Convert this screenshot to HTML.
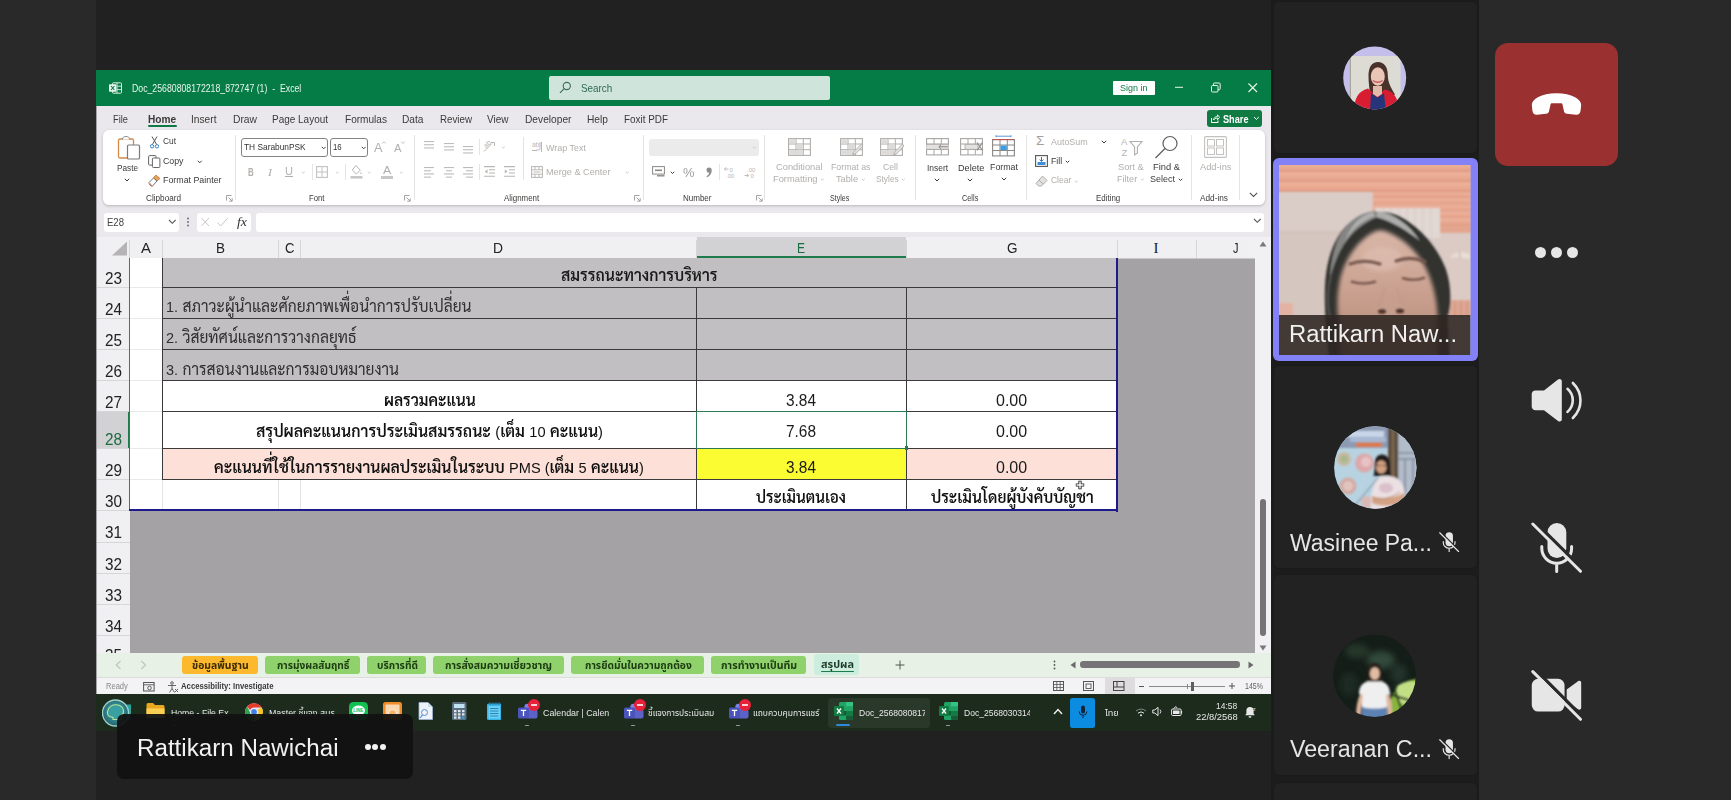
<!DOCTYPE html>
<html lang="th"><head><meta charset="utf-8"><title>Meeting - shared Excel</title><style>
html,body{margin:0;padding:0}
body{width:1731px;height:800px;overflow:hidden;background:#212121;position:relative;font-family:"Liberation Sans","Noto Sans Thai","Sarabun",sans-serif;}
.a{position:absolute;display:block}
.t{position:absolute;white-space:pre;line-height:1;transform-origin:0 50%;font-family:"Liberation Sans","Noto Sans Thai","Sarabun",sans-serif;}
.c{font-family:"Liberation Sans","Sarabun","Noto Sans Thai",sans-serif;}
</style></head>
<body>
<div class="a" style="left:0px;top:0px;width:96px;height:800px;background:#292929;"></div>
<div class="a" style="left:1271px;top:0px;width:460px;height:800px;background:#292929;"></div>
<div class="a" style="left:1271px;top:0px;width:207.5px;height:800px;background:#1c1c1c;"></div>
<div class="a" style="left:96px;top:70px;width:1175px;height:36px;background:#057c45;"></div>
<div class="a" style="left:96px;top:106px;width:1175px;height:131px;background:#eae8ed;"></div>
<svg class="a" style="left:108.5px;top:82px;" width="13" height="12" viewBox="0 0 13 12"><rect x="3.500" y=".8" width="9" height="10.400" rx=".8" fill="none" stroke="#d9efe4" stroke-width="1"/>
<path d="M8 1v10M8 4.200h4.500M8 7.600h4.500" stroke="#d9efe4" stroke-width=".9"/>
<rect x="0" y="2.300" width="7.400" height="7.400" rx=".8" fill="#e9f6ef"/>
<path d="M2.100 4l3.200 4M5.300 4L2.100 8" stroke="#057c45" stroke-width="1.100"/></svg>
<span class="t" style="left:132.4px;top:84.30px;font-size:10.2px;color:#e8f5ee;transform:scaleX(0.8565);">Doc_25680808172218_872747 (1)  -  Excel</span>
<div class="a" style="left:549px;top:76.2px;width:281px;height:24px;background:#cfe4da;border-radius:2px;"></div>
<svg class="a" style="left:559px;top:81px;" width="13" height="13" viewBox="0 0 13 13"><circle cx="7.8" cy="5" r="3.6" fill="none" stroke="#3d6f59" stroke-width="1.1"/><path d="M5.2 7.6L1 11.8" stroke="#3d6f59" stroke-width="1.2"/></svg>
<span class="t" style="left:580.5px;top:83.77px;font-size:10.3px;color:#2f6b52;transform:scaleX(0.9589);">Search</span>
<div class="a" style="left:1113px;top:80.8px;width:41.5px;height:14.2px;background:#ffffff;border-radius:1px;"></div>
<span class="t" style="left:1120px;top:83.30px;font-size:9.6px;color:#0f7a45;transform:scaleX(0.9372);">Sign in</span>
<svg class="a" style="left:1173px;top:80px;" width="90" height="16" viewBox="0 0 90 16"><path d="M2 7.3h8" stroke="#e8f5ee" stroke-width="1"/>
<rect x="38.5" y="5.5" width="6.5" height="6.5" rx="1" fill="none" stroke="#e8f5ee" stroke-width="1"/>
<path d="M40.5 5.3v-1.3a1 1 0 0 1 1-1h4.7a1 1 0 0 1 1 1v4.7a1 1 0 0 1-1 1h-1.2" fill="none" stroke="#e8f5ee" stroke-width="1"/>
<path d="M75.5 3.5l8.5 8.5M84 3.5l-8.5 8.5" stroke="#e8f5ee" stroke-width="1.1"/></svg>
<span class="t" style="left:112.5px;top:114.57px;font-size:10.3px;color:#3b3a39;transform:scaleX(0.8979);">File</span>
<span class="t" style="left:148.2px;top:114.57px;font-size:10.3px;color:#3b3a39;font-weight:700;transform:scaleX(0.9822);">Home</span>
<span class="t" style="left:191.3px;top:114.57px;font-size:10.3px;color:#3b3a39;transform:scaleX(0.9897);">Insert</span>
<span class="t" style="left:232.8px;top:114.57px;font-size:10.3px;color:#3b3a39;transform:scaleX(0.9987);">Draw</span>
<span class="t" style="left:272px;top:114.57px;font-size:10.3px;color:#3b3a39;transform:scaleX(0.9684);">Page Layout</span>
<span class="t" style="left:345px;top:114.57px;font-size:10.3px;color:#3b3a39;transform:scaleX(0.9785);">Formulas</span>
<span class="t" style="left:402px;top:114.57px;font-size:10.3px;color:#3b3a39;transform:scaleX(0.9878);">Data</span>
<span class="t" style="left:439.5px;top:114.57px;font-size:10.3px;color:#3b3a39;transform:scaleX(0.9477);">Review</span>
<span class="t" style="left:487px;top:114.57px;font-size:10.3px;color:#3b3a39;transform:scaleX(0.9711);">View</span>
<span class="t" style="left:524.5px;top:114.57px;font-size:10.3px;color:#3b3a39;transform:scaleX(0.9907);">Developer</span>
<span class="t" style="left:587px;top:114.57px;font-size:10.3px;color:#3b3a39;transform:scaleX(0.9912);">Help</span>
<span class="t" style="left:624px;top:114.57px;font-size:10.3px;color:#3b3a39;transform:scaleX(0.9611);">Foxit PDF</span>
<div class="a" style="left:148px;top:125.2px;width:29px;height:2px;background:#0f7a45;border-radius:1px;"></div>
<div class="a" style="left:1207px;top:109.5px;width:54.8px;height:17.3px;background:#0f7b43;border-radius:3px;"></div>
<svg class="a" style="left:1210px;top:112.5px;" width="10" height="11" viewBox="0 0 10 11"><path d="M1.5 5v4.5h6.5V7.5" fill="none" stroke="#fff" stroke-width="1"/><path d="M3.5 7c.3-2.3 1.8-3.4 4-3.5V1.8L9.6 4.3 7.5 6.8V5.1C5.700 5.100 4.500 5.700 3.500 7z" fill="none" stroke="#fff" stroke-width=".9"/></svg>
<span class="t" style="left:1222.5px;top:114.63px;font-size:10.3px;color:#ffffff;font-weight:700;transform:scaleX(0.8908);">Share</span>
<svg class="a" style="left:1253px;top:116px;" width="7" height="5" viewBox="0 0 7 5"><path d="M1 1l2.4 2.4L5.800 1" fill="none" stroke="#fff" stroke-width="1"/></svg>
<div class="a" style="left:103px;top:130px;width:1161.5px;height:75px;background:#ffffff;border-radius:6px;box-shadow:0 1px 3px rgba(0,0,0,.22);"></div>
<div class="a" style="left:103.5px;top:213px;width:75px;height:18.5px;background:#ffffff;border-radius:3px;"></div>
<span class="t" style="left:107px;top:216.81px;font-size:10.6px;color:#444;transform:scaleX(0.9014);">E28</span>
<svg class="a" style="left:168px;top:219px;" width="9" height="6" viewBox="0 0 9 6"><path d="M1 1l3.3 3.3L7.600 1" fill="none" stroke="#555" stroke-width="1.1"/></svg>
<svg class="a" style="left:186px;top:217px;" width="4" height="10" viewBox="0 0 4 10"><circle cx="2" cy="1.5" r=".9" fill="#666"/><circle cx="2" cy="5" r=".9" fill="#666"/><circle cx="2" cy="8.500" r=".9" fill="#666"/></svg>
<div class="a" style="left:196.5px;top:213px;width:54px;height:18.5px;background:#ffffff;border-radius:3px;"></div>
<svg class="a" style="left:200px;top:216px;" width="30" height="12" viewBox="0 0 30 12"><path d="M1.500 2l7.500 8M9 2l-7.500 8" stroke="#c8c8c8" stroke-width="1"/><path d="M17.500 6.500l3.200 3.500 7-8" fill="none" stroke="#c8c8c8" stroke-width="1"/></svg>
<span class="t" style="left:237px;top:215.88px;font-size:12.5px;color:#333;transform:scaleX(1.1073);font-style:italic;font-family:'Liberation Serif',serif;">fx</span>
<div class="a" style="left:256px;top:213px;width:1008px;height:18.5px;background:#ffffff;border-radius:3px;"></div>
<svg class="a" style="left:1253px;top:218px;" width="9" height="6" viewBox="0 0 9 6"><path d="M1 1l3.3 3.3L7.600 1" fill="none" stroke="#555" stroke-width="1.1"/></svg>
<svg class="a" style="left:117px;top:135px;" width="25" height="25" viewBox="0 0 25 25"><rect x="1.500" y="4" width="15" height="19" rx="1.500" fill="none" stroke="#d08a4c" stroke-width="1.300"/>
<path d="M5.500 4.500c0-2 1.200-3 3.500-3s3.500 1 3.500 3" fill="#fff" stroke="#8a8a8a" stroke-width="1"/>
<rect x="10.500" y="10" width="12" height="14" rx="1" fill="#fff" stroke="#7a7a7a" stroke-width="1.200"/></svg>
<span class="t" style="left:117px;top:163.15px;font-size:9.9px;color:#3b3a39;transform:scaleX(0.8312);">Paste</span>
<svg class="a" style="left:124px;top:177.5px;" width="6" height="4" viewBox="0 0 6 4"><path d="M.8 .8l2.2 2.2L5.2 .8" fill="none" stroke="#3b3a39" stroke-width="1"/></svg>
<svg class="a" style="left:150px;top:135.5px;" width="9" height="13" viewBox="0 0 9 13"><path d="M2 .5l4.600 8M7 .5L2.400 8.500" stroke="#555" stroke-width="1"/><circle cx="2" cy="10.300" r="1.700" fill="none" stroke="#3a86c8" stroke-width="1"/><circle cx="7" cy="10.300" r="1.700" fill="none" stroke="#3a86c8" stroke-width="1"/></svg>
<span class="t" style="left:163px;top:136.27px;font-size:9.9px;color:#3b3a39;transform:scaleX(0.8455);">Cut</span>
<svg class="a" style="left:148px;top:155px;" width="13" height="13" viewBox="0 0 13 13"><rect x=".6" y=".6" width="7.500" height="9.500" rx="1" fill="#fff" stroke="#666" stroke-width="1"/><rect x="4.400" y="3" width="7.500" height="9.500" rx="1" fill="#fff" stroke="#666" stroke-width="1"/></svg>
<span class="t" style="left:163px;top:156.25px;font-size:9.9px;color:#3b3a39;transform:scaleX(0.8889);">Copy</span>
<svg class="a" style="left:197px;top:160px;" width="5.5" height="3.8" viewBox="0 0 5.5 3.8"><path d="M.8 .8l1.95 1.9999999999999998L4.7 .8" fill="none" stroke="#3b3a39" stroke-width="1"/></svg>
<svg class="a" style="left:148px;top:174px;" width="13" height="13" viewBox="0 0 13 13"><path d="M8 1l4 3.500-3 2.500-3.500-3.500z" fill="#e9a15a" stroke="#c47a33" stroke-width=".8"/><path d="M5.500 4L1 8.500c1.500 1.500 2.500 3 3 4l5-5.500z" fill="#fff" stroke="#666" stroke-width=".9"/><path d="M.8 9.500l2.500 2.700" stroke="#d04a2a" stroke-width="1"/></svg>
<span class="t" style="left:163px;top:175.27px;font-size:9.9px;color:#3b3a39;transform:scaleX(0.8957);">Format Painter</span>
<span class="t" style="left:146px;top:193.93px;font-size:9.0px;color:#3b3a39;transform:scaleX(0.9084);">Clipboard</span>
<svg class="a" style="left:225.5px;top:195px;" width="7" height="7" viewBox="0 0 7 7"><path d="M.5 5.500V.5h5" fill="none" stroke="#9a9896" stroke-width=".9"/><path d="M2.500 2.500l3.500 3.500M6.200 3.300v2.900H3.300" fill="none" stroke="#9a9896" stroke-width=".9"/></svg>
<div class="a" style="left:234.5px;top:135px;width:1px;height:65px;background:#e6e4e2;"></div>
<div class="a" style="left:241.2px;top:138.2px;width:87.1px;height:18.6px;background:#fff;border:1px solid #85837f;border-radius:3px;box-sizing:border-box;"></div>
<span class="t" style="left:243.8px;top:142.40px;font-size:9.8px;color:#333;transform:scaleX(0.8518);">TH SarabunPSK</span>
<svg class="a" style="left:320.5px;top:145.8px;" width="5.5" height="3.8" viewBox="0 0 5.5 3.8"><path d="M.8 .8l1.95 1.9999999999999998L4.7 .8" fill="none" stroke="#444" stroke-width="1"/></svg>
<div class="a" style="left:330.4px;top:138.2px;width:38.1px;height:18.6px;background:#fff;border:1px solid #85837f;border-radius:3px;box-sizing:border-box;"></div>
<span class="t" style="left:332.8px;top:142.40px;font-size:9.8px;color:#333;transform:scaleX(0.7977);">16</span>
<svg class="a" style="left:360.5px;top:145.8px;" width="5.5" height="3.8" viewBox="0 0 5.5 3.8"><path d="M.8 .8l1.95 1.9999999999999998L4.7 .8" fill="none" stroke="#444" stroke-width="1"/></svg>
<span class="t" style="left:373.5px;top:141.82px;font-size:12.5px;color:#b2afac;transform:scaleX(1.0187);">A</span>
<svg class="a" style="left:382px;top:141px;" width="4" height="3" viewBox="0 0 4 3"><path d="M.3 2.600L2 .6l1.700 2" fill="none" stroke="#b9b6b3" stroke-width=".8"/></svg>
<span class="t" style="left:393.5px;top:143.05px;font-size:11px;color:#b2afac;transform:scaleX(1.0213);">A</span>
<svg class="a" style="left:400.5px;top:141px;" width="4" height="3" viewBox="0 0 4 3"><path d="M.3 .5L2 2.500 3.700 .5" fill="none" stroke="#b9b6b3" stroke-width=".8"/></svg>
<span class="t" style="left:247.8px;top:166.66px;font-size:10.5px;color:#b2afac;font-weight:700;transform:scaleX(0.7506);">B</span>
<span class="t" style="left:267.5px;top:167.62px;font-size:10.5px;color:#b2afac;transform:scaleX(1.1429);font-style:italic;font-family:'Liberation Serif',serif;">I</span>
<span class="t" style="left:285px;top:166.35px;font-size:10.5px;color:#b2afac;transform:scaleX(1.0535);text-decoration:underline;">U</span>
<svg class="a" style="left:301.2px;top:170.5px;" width="4.6" height="3.2" viewBox="0 0 4.6 3.2"><path d="M.8 .8l1.4999999999999998 1.4000000000000001L3.8 .8" fill="none" stroke="#cfcdcb" stroke-width="1"/></svg>
<div class="a" style="left:311.5px;top:164px;width:1px;height:16px;background:#e6e4e2;"></div>
<svg class="a" style="left:316px;top:166px;" width="12" height="12" viewBox="0 0 12 12"><rect x=".6" y=".6" width="10.800" height="10.800" fill="none" stroke="#c4c2c0" stroke-width="1.100"/><path d="M6 .6v10.800M.6 6h10.800" stroke="#c4c2c0" stroke-width="1"/></svg>
<svg class="a" style="left:334.5px;top:170.5px;" width="4.6" height="3.2" viewBox="0 0 4.6 3.2"><path d="M.8 .8l1.4999999999999998 1.4000000000000001L3.8 .8" fill="none" stroke="#cfcdcb" stroke-width="1"/></svg>
<div class="a" style="left:344.8px;top:164px;width:1px;height:16px;background:#e6e4e2;"></div>
<svg class="a" style="left:349.5px;top:164px;" width="13" height="15" viewBox="0 0 13 15"><path d="M6 1.500l4.300 4.800-4 3.700L2.300 6z" fill="none" stroke="#b9b6b3" stroke-width="1"/><path d="M10.800 7.800c.9 1.200 1 1.800.4 2.300-.6.400-1.200-.2-.4-2.300z" fill="#b9b6b3"/><rect x=".5" y="12" width="12" height="2.600" fill="#c9c7c5"/></svg>
<svg class="a" style="left:366.8px;top:170.5px;" width="4.6" height="3.2" viewBox="0 0 4.6 3.2"><path d="M.8 .8l1.4999999999999998 1.4000000000000001L3.8 .8" fill="none" stroke="#cfcdcb" stroke-width="1"/></svg>
<span class="t" style="left:382.8px;top:165.17px;font-size:11.5px;color:#b2afac;transform:scaleX(1.0688);">A</span>
<div class="a" style="left:381px;top:176.4px;width:12px;height:2.6px;background:#c9c7c5;"></div>
<svg class="a" style="left:399px;top:170.5px;" width="4.6" height="3.2" viewBox="0 0 4.6 3.2"><path d="M.8 .8l1.4999999999999998 1.4000000000000001L3.8 .8" fill="none" stroke="#cfcdcb" stroke-width="1"/></svg>
<span class="t" style="left:309.3px;top:193.93px;font-size:9.0px;color:#3b3a39;transform:scaleX(0.8604);">Font</span>
<svg class="a" style="left:404px;top:195px;" width="7" height="7" viewBox="0 0 7 7"><path d="M.5 5.500V.5h5" fill="none" stroke="#9a9896" stroke-width=".9"/><path d="M2.500 2.500l3.500 3.500M6.200 3.300v2.900H3.300" fill="none" stroke="#9a9896" stroke-width=".9"/></svg>
<div class="a" style="left:413.5px;top:135px;width:1px;height:65px;background:#e6e4e2;"></div>
<svg class="a" style="left:424px;top:141px;" width="12" height="10.600000000000001" viewBox="0 0 12 10.600000000000001"><rect x="0" y="0.0" width="10" height="1.100" fill="#bebcba"/><rect x="0" y="3.2" width="10" height="1.100" fill="#bebcba"/><rect x="0" y="6.4" width="10" height="1.100" fill="#bebcba"/></svg>
<svg class="a" style="left:443.5px;top:143px;" width="12" height="10.600000000000001" viewBox="0 0 12 10.600000000000001"><rect x="0" y="0.0" width="10" height="1.100" fill="#bebcba"/><rect x="0" y="3.2" width="10" height="1.100" fill="#bebcba"/><rect x="0" y="6.4" width="10" height="1.100" fill="#bebcba"/></svg>
<svg class="a" style="left:462.5px;top:145.5px;" width="12" height="10.600000000000001" viewBox="0 0 12 10.600000000000001"><rect x="0" y="0.0" width="10" height="1.100" fill="#bebcba"/><rect x="0" y="3.2" width="10" height="1.100" fill="#bebcba"/><rect x="0" y="6.4" width="10" height="1.100" fill="#bebcba"/></svg>
<div class="a" style="left:478.5px;top:139px;width:1px;height:16px;background:#e6e4e2;"></div>
<svg class="a" style="left:483px;top:139px;" width="14" height="14" viewBox="0 0 14 14"><path d="M1 12.500L9 4.500" stroke="#b9b6b3" stroke-width="1"/><text x="1.500" y="8" font-size="7" fill="#b9b6b3" transform="rotate(-45 4 7)" font-family="Liberation Sans,sans-serif">ab</text><path d="M8 3.500h3.500V7" fill="none" stroke="#b9b6b3" stroke-width="1"/></svg>
<svg class="a" style="left:500.5px;top:145.5px;" width="4.6" height="3.2" viewBox="0 0 4.6 3.2"><path d="M.8 .8l1.4999999999999998 1.4000000000000001L3.8 .8" fill="none" stroke="#cfcdcb" stroke-width="1"/></svg>
<svg class="a" style="left:424px;top:166.5px;" width="12" height="13.8" viewBox="0 0 12 13.8"><rect x="0" y="0.0" width="10" height="1.100" fill="#bebcba"/><rect x="0" y="3.2" width="7" height="1.100" fill="#bebcba"/><rect x="0" y="6.4" width="10" height="1.100" fill="#bebcba"/><rect x="0" y="9.600000000000001" width="7" height="1.100" fill="#bebcba"/></svg>
<svg class="a" style="left:443.5px;top:166.5px;" width="12" height="13.8" viewBox="0 0 12 13.8"><rect x="0" y="0.0" width="10" height="1.100" fill="#bebcba"/><rect x="2" y="3.2" width="6" height="1.100" fill="#bebcba"/><rect x="0" y="6.4" width="10" height="1.100" fill="#bebcba"/><rect x="2" y="9.600000000000001" width="6" height="1.100" fill="#bebcba"/></svg>
<svg class="a" style="left:462.5px;top:166.5px;" width="12" height="13.8" viewBox="0 0 12 13.8"><rect x="0" y="0.0" width="10" height="1.100" fill="#bebcba"/><rect x="3" y="3.2" width="7" height="1.100" fill="#bebcba"/><rect x="0" y="6.4" width="10" height="1.100" fill="#bebcba"/><rect x="3" y="9.600000000000001" width="7" height="1.100" fill="#bebcba"/></svg>
<div class="a" style="left:478.5px;top:164px;width:1px;height:16px;background:#e6e4e2;"></div>
<svg class="a" style="left:484px;top:166px;" width="12" height="11" viewBox="0 0 12 11"><path d="M0 .6h11M5 3.800h6M5 7h6M0 10.200h11" stroke="#b9b6b3" stroke-width="1.100"/><path d="M3.500 3.300L.8 5.400l2.700 2.100z" fill="#b9b6b3"/></svg>
<svg class="a" style="left:503.5px;top:166px;" width="12" height="11" viewBox="0 0 12 11"><path d="M0 .6h11M5 3.800h6M5 7h6M0 10.200h11" stroke="#b9b6b3" stroke-width="1.100"/><path d="M.8 3.300l2.700 2.100L.8 7.500z" fill="#b9b6b3"/></svg>
<div class="a" style="left:523px;top:137px;width:1px;height:43px;background:#e6e4e2;"></div>
<svg class="a" style="left:532px;top:141px;" width="12" height="12" viewBox="0 0 12 12"><text x="0" y="5.500" font-size="6.500" fill="#b9b6b3" font-family="Liberation Sans,sans-serif">ab</text><path d="M0 9.500h5M8 1v6.500c0 2-3 2-3 .5" fill="none" stroke="#b9b6b3" stroke-width="1"/><path d="M9.500 1v10" stroke="#b9b6b3" stroke-width="1"/></svg>
<span class="t" style="left:546px;top:142.66px;font-size:9.8px;color:#b2afac;transform:scaleX(0.9143);">Wrap Text</span>
<svg class="a" style="left:530.5px;top:166px;" width="12" height="12" viewBox="0 0 12 12"><rect x=".6" y=".6" width="10.800" height="10.800" fill="none" stroke="#b9b6b3" stroke-width="1"/><path d="M.6 3.800h10.800M.6 8.200h10.800M4 .6v3.200M8 .6v3.200M4 8.200v3.200M8 8.200v3.200" stroke="#b9b6b3" stroke-width=".9"/><path d="M2.500 6h7" stroke="#b9b6b3" stroke-width=".9"/></svg>
<span class="t" style="left:546px;top:167.20px;font-size:9.8px;color:#b2afac;transform:scaleX(0.9327);">Merge &amp; Center</span>
<svg class="a" style="left:625px;top:170.5px;" width="4.6" height="3.2" viewBox="0 0 4.6 3.2"><path d="M.8 .8l1.4999999999999998 1.4000000000000001L3.8 .8" fill="none" stroke="#cfcdcb" stroke-width="1"/></svg>
<span class="t" style="left:503.8px;top:193.93px;font-size:9.0px;color:#3b3a39;transform:scaleX(0.8793);">Alignment</span>
<svg class="a" style="left:633.5px;top:195px;" width="7" height="7" viewBox="0 0 7 7"><path d="M.5 5.500V.5h5" fill="none" stroke="#9a9896" stroke-width=".9"/><path d="M2.500 2.500l3.500 3.500M6.200 3.300v2.900H3.300" fill="none" stroke="#9a9896" stroke-width=".9"/></svg>
<div class="a" style="left:642.5px;top:135px;width:1px;height:65px;background:#e6e4e2;"></div>
<div class="a" style="left:649px;top:138.7px;width:110px;height:17.6px;background:#ebebeb;border-radius:3px;"></div>
<svg class="a" style="left:752px;top:146px;" width="4.6" height="3.2" viewBox="0 0 4.6 3.2"><path d="M.8 .8l1.4999999999999998 1.4000000000000001L3.8 .8" fill="none" stroke="#cfcdcb" stroke-width="1"/></svg>
<svg class="a" style="left:652px;top:166px;" width="13" height="11" viewBox="0 0 13 11"><rect x=".6" y=".6" width="11.800" height="7.500" fill="none" stroke="#8a8886" stroke-width="1"/><path d="M3 4.300h7" stroke="#8a8886" stroke-width="1.600"/><path d="M5 9.800h7.500" stroke="#8a8886" stroke-width="1.400"/></svg>
<svg class="a" style="left:670px;top:170.5px;" width="5" height="3.5" viewBox="0 0 5 3.5"><path d="M.8 .8l1.7 1.7L4.2 .8" fill="none" stroke="#444" stroke-width="1"/></svg>
<span class="t" style="left:683px;top:166.68px;font-size:12.5px;color:#a19f9d;transform:scaleX(1.0337);">%</span>
<svg class="a" style="left:705px;top:166.5px;" width="8" height="11" viewBox="0 0 8 11"><path d="M4 .6a2.700 2.700 0 0 1 2.700 2.800c0 3-1.700 5.600-4.700 6.800l-.5-.9c1.700-1 2.600-2.200 2.700-3.500A2.600 2.600 0 0 1 4 .6z" fill="#8f8d8b"/></svg>
<div class="a" style="left:719px;top:164px;width:1px;height:16px;background:#e6e4e2;"></div>
<svg class="a" style="left:724px;top:165.5px;" width="12" height="13" viewBox="0 0 12 13"><path d="M.5 3h4M2 1.300L.4 3 2 4.700" fill="none" stroke="#b9b6b3" stroke-width=".9"/><text x="5.500" y="5.500" font-size="6" fill="#b9b6b3" font-family="Liberation Sans,sans-serif">0</text><text x="2" y="12.300" font-size="6" fill="#b9b6b3" font-family="Liberation Sans,sans-serif">.00</text></svg>
<svg class="a" style="left:744px;top:165.5px;" width="12" height="13" viewBox="0 0 12 13"><text x="3" y="5.500" font-size="6" fill="#b9b6b3" font-family="Liberation Sans,sans-serif">.00</text><path d="M.5 9.500h4M3 7.800L4.600 9.500 3 11.200" fill="none" stroke="#b9b6b3" stroke-width=".9"/><text x="6.500" y="12.300" font-size="6" fill="#b9b6b3" font-family="Liberation Sans,sans-serif">0</text></svg>
<span class="t" style="left:682.5px;top:193.93px;font-size:9.0px;color:#3b3a39;transform:scaleX(0.8902);">Number</span>
<svg class="a" style="left:755.5px;top:195px;" width="7" height="7" viewBox="0 0 7 7"><path d="M.5 5.500V.5h5" fill="none" stroke="#9a9896" stroke-width=".9"/><path d="M2.500 2.500l3.500 3.500M6.200 3.300v2.900H3.300" fill="none" stroke="#9a9896" stroke-width=".9"/></svg>
<div class="a" style="left:764px;top:135px;width:1px;height:65px;background:#e6e4e2;"></div>
<svg class="a" style="left:788px;top:138px;" width="23" height="18" viewBox="0 0 23 18"><rect x=".6" y=".6" width="21.800" height="16.800" fill="none" stroke="#b0aeac" stroke-width="1.100"/><path d="M.6 6h21.800M.6 11.700h21.800M8 .6v16.800M15.300 .6v16.800" stroke="#b0aeac" stroke-width="1"/><rect x="1.200" y="1.200" width="6.300" height="4.300" fill="#dddbd9"/><rect x="8.500" y="6.500" width="6.300" height="4.700" fill="#dddbd9"/><rect x="1.200" y="12.200" width="13.600" height="4.600" fill="#dddbd9"/></svg>
<span class="t" style="left:776px;top:162.20px;font-size:9.8px;color:#b2afac;transform:scaleX(0.9484);">Conditional</span>
<span class="t" style="left:773px;top:174.20px;font-size:9.8px;color:#b2afac;transform:scaleX(0.9503);">Formatting</span>
<svg class="a" style="left:820px;top:178px;" width="4.6" height="3.2" viewBox="0 0 4.6 3.2"><path d="M.8 .8l1.4999999999999998 1.4000000000000001L3.8 .8" fill="none" stroke="#cfcdcb" stroke-width="1"/></svg>
<svg class="a" style="left:839.5px;top:138px;" width="23" height="18" viewBox="0 0 23 18"><rect x=".6" y=".6" width="21.800" height="16.800" fill="none" stroke="#b0aeac" stroke-width="1.100"/><path d="M.6 6h21.800M.6 11.700h21.800M8 .6v16.800M15.300 .6v16.800" stroke="#b0aeac" stroke-width="1"/><rect x="1.200" y="1.200" width="6.300" height="4.300" fill="#dddbd9"/><rect x="8.500" y="6.500" width="6.300" height="4.700" fill="#dddbd9"/><rect x="1.200" y="12.200" width="13.600" height="4.600" fill="#dddbd9"/></svg>
<svg class="a" style="left:850px;top:143px;" width="13" height="13" viewBox="0 0 13 13"><path d="M11.500 1L4 8.500 2.500 12l3.500-1.500L13 3z" fill="#e3e1df" stroke="#b0aeac" stroke-width=".9"/></svg>
<span class="t" style="left:831px;top:162.20px;font-size:9.8px;color:#b2afac;transform:scaleX(0.8955);">Format as</span>
<span class="t" style="left:836px;top:174.20px;font-size:9.8px;color:#b2afac;transform:scaleX(0.9393);">Table</span>
<svg class="a" style="left:860.5px;top:178px;" width="4.6" height="3.2" viewBox="0 0 4.6 3.2"><path d="M.8 .8l1.4999999999999998 1.4000000000000001L3.8 .8" fill="none" stroke="#cfcdcb" stroke-width="1"/></svg>
<svg class="a" style="left:880px;top:138px;" width="23" height="18" viewBox="0 0 23 18"><rect x=".6" y=".6" width="21.800" height="16.800" fill="none" stroke="#b0aeac" stroke-width="1.100"/><path d="M.6 6h21.800M.6 11.700h21.800M8 .6v16.800M15.300 .6v16.800" stroke="#b0aeac" stroke-width="1"/><rect x="1.200" y="1.200" width="6.300" height="4.300" fill="#dddbd9"/><rect x="8.500" y="6.500" width="6.300" height="4.700" fill="#dddbd9"/><rect x="1.200" y="12.200" width="13.600" height="4.600" fill="#dddbd9"/></svg>
<svg class="a" style="left:890.5px;top:143px;" width="13" height="13" viewBox="0 0 13 13"><path d="M11.500 1L4 8.500 2.500 12l3.500-1.500L13 3z" fill="#e3e1df" stroke="#b0aeac" stroke-width=".9"/></svg>
<span class="t" style="left:883px;top:162.20px;font-size:9.8px;color:#b2afac;transform:scaleX(0.8881);">Cell</span>
<span class="t" style="left:875.8px;top:174.20px;font-size:9.8px;color:#b2afac;transform:scaleX(0.8506);">Styles</span>
<svg class="a" style="left:901px;top:178px;" width="4.6" height="3.2" viewBox="0 0 4.6 3.2"><path d="M.8 .8l1.4999999999999998 1.4000000000000001L3.8 .8" fill="none" stroke="#cfcdcb" stroke-width="1"/></svg>
<span class="t" style="left:829.5px;top:193.93px;font-size:9.0px;color:#3b3a39;transform:scaleX(0.7873);">Styles</span>
<div class="a" style="left:915px;top:135px;width:1px;height:65px;background:#e6e4e2;"></div>
<svg class="a" style="left:926px;top:138px;" width="23" height="18" viewBox="0 0 23 18"><rect x=".6" y=".6" width="21.800" height="16.300" fill="none" stroke="#a8a6a4" stroke-width="1.100"/><path d="M.6 6h21.800M.6 11.500h21.800M8 .6v16.300M15.300 .6v16.300" stroke="#a8a6a4" stroke-width="1"/><rect x="0" y="6.300" width="23" height="5" fill="#e4e2e0" stroke="#a8a6a4" stroke-width=".8"/><path d="M22 8.800h-9M15 6.800l-2.200 2 2.200 2" fill="none" stroke="#8a8886" stroke-width="1"/></svg>
<span class="t" style="left:926.8px;top:163.15px;font-size:9.9px;color:#3b3a39;transform:scaleX(0.8582);">Insert</span>
<svg class="a" style="left:934px;top:177.5px;" width="6" height="4" viewBox="0 0 6 4"><path d="M.8 .8l2.2 2.2L5.2 .8" fill="none" stroke="#3b3a39" stroke-width="1"/></svg>
<svg class="a" style="left:959.5px;top:138px;" width="23" height="18" viewBox="0 0 23 18"><rect x=".6" y=".6" width="21.800" height="16.300" fill="none" stroke="#a8a6a4" stroke-width="1.100"/><path d="M.6 6h21.800M.6 11.500h21.800M8 .6v16.300M15.300 .6v16.300" stroke="#a8a6a4" stroke-width="1"/><rect x="5" y="6.300" width="13" height="5" fill="#e4e2e0" stroke="#a8a6a4" stroke-width=".8"/><path d="M17 4.500l5.500 8M22.500 4.500l-5.500 8" stroke="#8a8886" stroke-width="1.100"/></svg>
<span class="t" style="left:957.5px;top:163.15px;font-size:9.9px;color:#3b3a39;transform:scaleX(0.9213);">Delete</span>
<svg class="a" style="left:967px;top:177.5px;" width="6" height="4" viewBox="0 0 6 4"><path d="M.8 .8l2.2 2.2L5.2 .8" fill="none" stroke="#3b3a39" stroke-width="1"/></svg>
<svg class="a" style="left:992px;top:134.5px;" width="23" height="22" viewBox="0 0 23 22"><path d="M4 1.200h15M4 .2v2M19 .2v2" stroke="#4a8fd0" stroke-width=".9"/><rect x=".6" y="4.600" width="21.800" height="16.300" fill="none" stroke="#8a8886" stroke-width="1.100"/><path d="M.6 10h21.800M.6 15.500h21.800M8 4.600v16.300M15.300 4.600v16.300" stroke="#8a8886" stroke-width="1"/><rect x="8.500" y="10.500" width="6.300" height="4.500" fill="#3f9be0"/><path d="M.6 4.600h21.800" stroke="#c0504d" stroke-width="1"/></svg>
<span class="t" style="left:989.5px;top:161.95px;font-size:9.9px;color:#3b3a39;transform:scaleX(0.8951);">Format</span>
<svg class="a" style="left:1000.5px;top:176.5px;" width="6" height="4" viewBox="0 0 6 4"><path d="M.8 .8l2.2 2.2L5.2 .8" fill="none" stroke="#3b3a39" stroke-width="1"/></svg>
<span class="t" style="left:962px;top:193.93px;font-size:9.0px;color:#3b3a39;transform:scaleX(0.8144);">Cells</span>
<div class="a" style="left:1025.5px;top:135px;width:1px;height:65px;background:#e6e4e2;"></div>
<span class="t" style="left:1036px;top:134.42px;font-size:13.5px;color:#a19f9d;">Σ</span>
<span class="t" style="left:1050.8px;top:136.70px;font-size:9.8px;color:#b2afac;transform:scaleX(0.9104);">AutoSum</span>
<svg class="a" style="left:1101px;top:139.5px;" width="6" height="4" viewBox="0 0 6 4"><path d="M.8 .8l2.2 2.2L5.2 .8" fill="none" stroke="#3b3a39" stroke-width="1"/></svg>
<svg class="a" style="left:1035px;top:155px;" width="13" height="12" viewBox="0 0 13 12"><rect x=".6" y=".6" width="11.800" height="10.800" fill="#fff" stroke="#555" stroke-width="1.100"/><rect x="2.500" y="7" width="8" height="3" fill="#3f8fd6"/><path d="M6.500 2v4.200M4.600 4.500l1.900 1.900 1.900-1.900" fill="none" stroke="#2b6fb5" stroke-width="1"/></svg>
<span class="t" style="left:1050.8px;top:156.30px;font-size:9.8px;color:#3b3a39;transform:scaleX(0.8949);">Fill</span>
<svg class="a" style="left:1065px;top:159.8px;" width="5" height="3.5" viewBox="0 0 5 3.5"><path d="M.8 .8l1.7 1.7L4.2 .8" fill="none" stroke="#3b3a39" stroke-width="1"/></svg>
<svg class="a" style="left:1035px;top:174.5px;" width="13" height="12" viewBox="0 0 13 12"><path d="M7.500 1l4.500 4.500-5.500 5.500H3.500L1 8.500z" fill="#e3e1df" stroke="#b0aeac" stroke-width="1"/><path d="M4 5l4 4" stroke="#b0aeac" stroke-width="1"/></svg>
<span class="t" style="left:1050.8px;top:175.32px;font-size:9.8px;color:#b2afac;transform:scaleX(0.8624);">Clear</span>
<svg class="a" style="left:1074px;top:179.5px;" width="4.6" height="3.2" viewBox="0 0 4.6 3.2"><path d="M.8 .8l1.4999999999999998 1.4000000000000001L3.8 .8" fill="none" stroke="#cfcdcb" stroke-width="1"/></svg>
<svg class="a" style="left:1120px;top:136px;" width="23" height="23" viewBox="0 0 23 23"><text x="1" y="9" font-size="9.500" fill="#b9b6b3" font-family="Liberation Sans,sans-serif">A</text><text x="1.500" y="20" font-size="9.500" fill="#b9b6b3" font-family="Liberation Sans,sans-serif">Z</text><path d="M10 5.500h12l-4.600 5.500v6l-2.800 2v-8z" fill="none" stroke="#b0aeac" stroke-width="1.100"/></svg>
<span class="t" style="left:1118px;top:162.20px;font-size:9.8px;color:#b2afac;transform:scaleX(0.9473);">Sort &amp;</span>
<span class="t" style="left:1116.8px;top:174.20px;font-size:9.8px;color:#b2afac;transform:scaleX(0.9274);">Filter</span>
<svg class="a" style="left:1139.5px;top:178px;" width="4.6" height="3.2" viewBox="0 0 4.6 3.2"><path d="M.8 .8l1.4999999999999998 1.4000000000000001L3.8 .8" fill="none" stroke="#cfcdcb" stroke-width="1"/></svg>
<svg class="a" style="left:1154px;top:135px;" width="25" height="25" viewBox="0 0 25 25"><circle cx="16" cy="8.500" r="7" fill="none" stroke="#605e5c" stroke-width="1.200"/><path d="M11 13.500L1.500 23" stroke="#605e5c" stroke-width="1.300"/></svg>
<span class="t" style="left:1153px;top:162.15px;font-size:9.9px;color:#3b3a39;transform:scaleX(0.9458);">Find &amp;</span>
<span class="t" style="left:1150px;top:174.15px;font-size:9.9px;color:#3b3a39;transform:scaleX(0.9106);">Select</span>
<svg class="a" style="left:1177.5px;top:177.8px;" width="5" height="3.5" viewBox="0 0 5 3.5"><path d="M.8 .8l1.7 1.7L4.2 .8" fill="none" stroke="#3b3a39" stroke-width="1"/></svg>
<span class="t" style="left:1095.8px;top:193.93px;font-size:9.0px;color:#3b3a39;transform:scaleX(0.8790);">Editing</span>
<div class="a" style="left:1191.2px;top:135px;width:1px;height:65px;background:#e6e4e2;"></div>
<svg class="a" style="left:1203.5px;top:136px;" width="23" height="22" viewBox="0 0 23 22"><rect x=".6" y=".6" width="21.800" height="20.800" rx="1" fill="none" stroke="#c4c2c0" stroke-width="1.100"/><rect x="3.500" y="3.500" width="7" height="6.500" fill="none" stroke="#c4c2c0" stroke-width="1"/><rect x="12.500" y="3.500" width="7" height="6.500" fill="none" stroke="#c4c2c0" stroke-width="1"/><rect x="3.500" y="12" width="7" height="6.500" fill="none" stroke="#c4c2c0" stroke-width="1"/><rect x="12.500" y="12" width="7" height="6.500" fill="none" stroke="#c4c2c0" stroke-width="1"/></svg>
<span class="t" style="left:1199.5px;top:162.20px;font-size:9.8px;color:#b2afac;transform:scaleX(0.9483);">Add-ins</span>
<span class="t" style="left:1200px;top:193.93px;font-size:9.0px;color:#3b3a39;transform:scaleX(0.9176);">Add-ins</span>
<div class="a" style="left:1238.8px;top:135px;width:1px;height:65px;background:#e6e4e2;"></div>
<svg class="a" style="left:1249px;top:192px;" width="9" height="6" viewBox="0 0 9 6"><path d="M.8 .8l3.700 3.700L8.200 .8" fill="none" stroke="#555" stroke-width="1.100"/></svg>
<div class="a" style="left:96px;top:237px;width:1159px;height:416px;background:#a4a2a4;"></div>
<div class="a" style="left:96px;top:237px;width:1159px;height:21px;background:#f0eff1;"></div>
<svg class="a" style="left:111px;top:240.5px;" width="17" height="15" viewBox="0 0 17 15"><path d="M16 .5V14.500H1z" fill="#b5b3b5"/></svg>
<div class="a" style="left:129.0px;top:240px;width:1px;height:18px;background:#d6d5d7;"></div>
<div class="a" style="left:161.5px;top:240px;width:1px;height:18px;background:#d6d5d7;"></div>
<div class="a" style="left:277.5px;top:240px;width:1px;height:18px;background:#d6d5d7;"></div>
<div class="a" style="left:300.0px;top:240px;width:1px;height:18px;background:#d6d5d7;"></div>
<div class="a" style="left:696.0px;top:240px;width:1px;height:18px;background:#d6d5d7;"></div>
<div class="a" style="left:905.7px;top:240px;width:1px;height:18px;background:#d6d5d7;"></div>
<div class="a" style="left:1117.0px;top:240px;width:1px;height:18px;background:#d6d5d7;"></div>
<div class="a" style="left:1195.5px;top:240px;width:1px;height:18px;background:#d6d5d7;"></div>
<div class="a" style="left:1254.5px;top:240px;width:1px;height:18px;background:#d6d5d7;"></div>
<div class="a" style="left:96px;top:257.5px;width:1159px;height:1px;background:#c9c8ca;"></div>
<div class="a" style="left:696.5px;top:237px;width:209.7px;height:19.5px;background:#d2d1d3;"></div>
<div class="a" style="left:696.5px;top:256px;width:209.7px;height:2px;background:#1f7a4c;"></div>
<span class="t" style="left:141.0px;top:240.55px;font-size:14.8px;color:#222;transform:scaleX(1.0127);">A</span>
<span class="t" style="left:216.0px;top:240.55px;font-size:14.8px;color:#222;transform:scaleX(0.9114);">B</span>
<span class="t" style="left:285.05px;top:240.55px;font-size:14.8px;color:#222;transform:scaleX(0.8889);">C</span>
<span class="t" style="left:493.0px;top:240.55px;font-size:14.8px;color:#222;transform:scaleX(0.9357);">D</span>
<span class="t" style="left:797.0px;top:240.55px;font-size:14.8px;color:#1b6b43;transform:scaleX(0.8101);">E</span>
<span class="t" style="left:1006.75px;top:240.55px;font-size:14.8px;color:#222;transform:scaleX(0.9118);">G</span>
<span class="t" style="left:1153.5px;top:241.09px;font-size:15px;color:#222;font-family:'Liberation Serif',serif;">I</span>
<span class="t" style="left:1232.75px;top:240.55px;font-size:14.8px;color:#222;transform:scaleX(0.7426);">J</span>
<div class="a" style="left:96px;top:258px;width:33.5px;height:395px;background:#f0eff1;"></div>
<div class="a" style="left:96px;top:286.5px;width:33.5px;height:1px;background:#d6d5d7;"></div>
<div class="a" style="left:96px;top:317.7px;width:33.5px;height:1px;background:#d6d5d7;"></div>
<div class="a" style="left:96px;top:348.9px;width:33.5px;height:1px;background:#d6d5d7;"></div>
<div class="a" style="left:96px;top:380.1px;width:33.5px;height:1px;background:#d6d5d7;"></div>
<div class="a" style="left:96px;top:411.1px;width:33.5px;height:1px;background:#d6d5d7;"></div>
<div class="a" style="left:96px;top:447.7px;width:33.5px;height:1px;background:#d6d5d7;"></div>
<div class="a" style="left:96px;top:479.1px;width:33.5px;height:1px;background:#d6d5d7;"></div>
<div class="a" style="left:96px;top:509.9px;width:33.5px;height:1px;background:#d6d5d7;"></div>
<div class="a" style="left:96px;top:541.5px;width:33.5px;height:1px;background:#d6d5d7;"></div>
<div class="a" style="left:96px;top:572.7px;width:33.5px;height:1px;background:#d6d5d7;"></div>
<div class="a" style="left:96px;top:603.9px;width:33.5px;height:1px;background:#d6d5d7;"></div>
<div class="a" style="left:96px;top:635.1px;width:33.5px;height:1px;background:#d6d5d7;"></div>
<div class="a" style="left:96px;top:652.5px;width:33.5px;height:1px;background:#d6d5d7;"></div>
<div class="a" style="left:96px;top:411.6px;width:33px;height:36.6px;background:#d2d1d3;"></div>
<div class="a" style="left:128px;top:411.6px;width:1.8px;height:36.6px;background:#1f7a4c;"></div>
<span class="t" style="left:104.5px;top:270.52px;font-size:15.8px;color:#222;transform:scaleX(0.9671);">23</span>
<span class="t" style="left:104.5px;top:301.56px;font-size:15.8px;color:#222;transform:scaleX(0.9671);">24</span>
<span class="t" style="left:104.5px;top:332.60px;font-size:15.8px;color:#222;transform:scaleX(0.9671);">25</span>
<span class="t" style="left:104.5px;top:363.88px;font-size:15.8px;color:#222;transform:scaleX(0.9671);">26</span>
<span class="t" style="left:104.5px;top:394.88px;font-size:15.8px;color:#222;transform:scaleX(0.9671);">27</span>
<span class="t" style="left:104.5px;top:431.56px;font-size:15.8px;color:#1b6b43;transform:scaleX(0.9671);">28</span>
<span class="t" style="left:104.5px;top:462.88px;font-size:15.8px;color:#222;transform:scaleX(0.9671);">29</span>
<span class="t" style="left:104.5px;top:493.60px;font-size:15.8px;color:#222;transform:scaleX(0.9671);">30</span>
<span class="t" style="left:104.5px;top:524.56px;font-size:15.8px;color:#222;transform:scaleX(0.9671);">31</span>
<span class="t" style="left:104.5px;top:556.56px;font-size:15.8px;color:#222;transform:scaleX(0.9671);">32</span>
<span class="t" style="left:104.5px;top:587.60px;font-size:15.8px;color:#222;transform:scaleX(0.9671);">33</span>
<span class="t" style="left:104.5px;top:618.88px;font-size:15.8px;color:#222;transform:scaleX(0.9671);">34</span>
<span class="t" style="left:104.5px;top:648.06px;font-size:15.8px;color:#222;transform:scaleX(0.9671);">35</span>
<div class="a" style="left:129px;top:258px;width:1px;height:252px;background:#5a5ab8;"></div>
<div class="a" style="left:130px;top:258px;width:32px;height:252px;background:#ffffff;"></div>
<div class="a" style="left:162px;top:258px;width:954.8px;height:122.6px;background:#c1bfc1;"></div>
<div class="a" style="left:162px;top:380.6px;width:954.8px;height:67.6px;background:#ffffff;"></div>
<div class="a" style="left:162px;top:448.2px;width:954.8px;height:31.4px;background:#fde1d8;"></div>
<div class="a" style="left:696.5px;top:448.2px;width:209.7px;height:31.4px;background:#fcfc33;"></div>
<div class="a" style="left:130px;top:479.6px;width:986.8px;height:30.2px;background:#ffffff;"></div>
<div class="a" style="left:161.5px;top:479.6px;width:1px;height:30px;background:#e4e4e4;"></div>
<div class="a" style="left:277.5px;top:479.6px;width:1px;height:30px;background:#e4e4e4;"></div>
<div class="a" style="left:300.0px;top:479.6px;width:1px;height:30px;background:#e4e4e4;"></div>
<div class="a" style="left:130px;top:286.5px;width:32px;height:1px;background:#e9e9e9;"></div>
<div class="a" style="left:130px;top:317.7px;width:32px;height:1px;background:#e9e9e9;"></div>
<div class="a" style="left:130px;top:348.9px;width:32px;height:1px;background:#e9e9e9;"></div>
<div class="a" style="left:130px;top:380.1px;width:32px;height:1px;background:#e9e9e9;"></div>
<div class="a" style="left:130px;top:411.1px;width:32px;height:1px;background:#e9e9e9;"></div>
<div class="a" style="left:130px;top:447.7px;width:32px;height:1px;background:#e9e9e9;"></div>
<div class="a" style="left:130px;top:479.1px;width:32px;height:1px;background:#e9e9e9;"></div>
<div class="a" style="left:162px;top:286.5px;width:954.5px;height:1px;background:#3a3a3a;"></div>
<div class="a" style="left:162px;top:317.7px;width:954.5px;height:1px;background:#3a3a3a;"></div>
<div class="a" style="left:162px;top:348.9px;width:954.5px;height:1px;background:#3a3a3a;"></div>
<div class="a" style="left:162px;top:380.1px;width:954.5px;height:1px;background:#3a3a3a;"></div>
<div class="a" style="left:162px;top:411.1px;width:954.5px;height:1px;background:#3a3a3a;"></div>
<div class="a" style="left:162px;top:447.7px;width:954.5px;height:1px;background:#3a3a3a;"></div>
<div class="a" style="left:162px;top:479.1px;width:954.5px;height:1px;background:#3a3a3a;"></div>
<div class="a" style="left:161.5px;top:258px;width:1px;height:221.6px;background:#3a3a3a;"></div>
<div class="a" style="left:696px;top:287px;width:1px;height:223px;background:#3a3a3a;"></div>
<div class="a" style="left:905.7px;top:287px;width:1px;height:223px;background:#3a3a3a;"></div>
<div class="a" style="left:1115.8px;top:258px;width:2.2px;height:253.5px;background:#1d1a8c;"></div>
<div class="a" style="left:129px;top:509.2px;width:989px;height:2.3px;background:#1d1a8c;"></div>
<div class="a" style="left:695.8px;top:411px;width:211px;height:37.8px;border:1.300px solid #2a7a52;box-sizing:border-box;"></div>
<div class="a" style="left:904.5px;top:446px;width:3.5px;height:3.5px;background:#2a7a52;"></div>
<span class="t c" style="left:561px;top:268.21px;font-size:16.6px;color:#1a1a1a;font-weight:600;transform:scaleX(0.9433);">สมรรถนะทางการบริหาร</span>
<span class="t c" style="left:166px;top:299.21px;font-size:16.6px;color:#303030;transform:scaleX(0.9388);"><span style="font-size:0.93em;font-weight:400">1.</span> สภาวะผู้นำและศักยภาพเพื่อนำการปรับเปลี่ยน</span>
<span class="t c" style="left:166px;top:329.85px;font-size:16.6px;color:#303030;transform:scaleX(0.9387);"><span style="font-size:0.93em;font-weight:400">2.</span> วิสัยทัศน์และการวางกลยุทธ์</span>
<span class="t c" style="left:166px;top:361.55px;font-size:16.6px;color:#303030;transform:scaleX(0.9395);"><span style="font-size:0.93em;font-weight:400">3.</span> การสอนงานและการมอบหมายงาน</span>
<span class="t c" style="left:383.5px;top:392.55px;font-size:16.6px;color:#111;font-weight:600;transform:scaleX(0.9318);">ผลรวมคะแนน</span>
<span class="t c" style="left:255.5px;top:423.55px;font-size:16.6px;color:#111;font-weight:600;transform:scaleX(0.9496);">สรุปผลคะแนนการประเมินสมรรถนะ <span style="font-size:0.93em;font-weight:400">(</span>เต็ม <span style="font-size:0.93em;font-weight:400">10</span> คะแนน<span style="font-size:0.93em;font-weight:400">)</span></span>
<span class="t c" style="left:214px;top:460.21px;font-size:16.6px;color:#111;font-weight:600;transform:scaleX(0.9454);">คะแนนที่ใช้ในการรายงานผลประเมินในระบบ <span style="font-size:0.93em;font-weight:400">PMS (</span>เต็ม <span style="font-size:0.93em;font-weight:400">5</span> คะแนน<span style="font-size:0.93em;font-weight:400">)</span></span>
<span class="t" style="left:786.2px;top:392.66px;font-size:15.6px;color:#1a1a1a;transform:scaleX(0.9882);">3.84</span>
<span class="t" style="left:786.2px;top:423.80px;font-size:15.6px;color:#1a1a1a;transform:scaleX(0.9882);">7.68</span>
<span class="t" style="left:786.2px;top:459.80px;font-size:15.6px;color:#1a1a1a;transform:scaleX(0.9882);">3.84</span>
<span class="t" style="left:995.8px;top:392.66px;font-size:15.6px;color:#1a1a1a;transform:scaleX(1.0277);">0.00</span>
<span class="t" style="left:995.8px;top:423.80px;font-size:15.6px;color:#1a1a1a;transform:scaleX(1.0277);">0.00</span>
<span class="t" style="left:995.8px;top:459.80px;font-size:15.6px;color:#1a1a1a;transform:scaleX(1.0277);">0.00</span>
<span class="t c" style="left:756px;top:490.03px;font-size:16.6px;color:#111;font-weight:600;transform:scaleX(0.9114);">ประเมินตนเอง</span>
<span class="t c" style="left:931px;top:490.03px;font-size:16.6px;color:#111;font-weight:600;transform:scaleX(0.9310);">ประเมินโดยผู้บังคับบัญชา</span>
<svg class="a" style="left:1074.5px;top:479.5px;" width="10" height="10" viewBox="0 0 10 10"><path d="M5 .8v8.400M.8 5h8.400" stroke="#222" stroke-width="3.200"/><path d="M5 1.500v7M1.500 5h7" stroke="#fff" stroke-width="1.400"/></svg>
<div class="a" style="left:1255px;top:237px;width:16px;height:416px;background:#f1f0f2;"></div>
<svg class="a" style="left:1259px;top:241px;" width="8" height="6" viewBox="0 0 8 6"><path d="M4 .5L7.500 5.500H.5z" fill="#7a787a"/></svg>
<div class="a" style="left:1259.8px;top:499px;width:6.4px;height:136.5px;background:#767376;border-radius:3.200px;"></div>
<svg class="a" style="left:1259px;top:645px;" width="8" height="6" viewBox="0 0 8 6"><path d="M.5 .5h7L4 5.500z" fill="#7a787a"/></svg>
<div class="a" style="left:96px;top:653px;width:1175px;height:24.5px;background:#e7f1e6;"></div>
<svg class="a" style="left:115px;top:660px;" width="7" height="10" viewBox="0 0 7 10"><path d="M5.500 1L1.300 5l4.200 4" fill="none" stroke="#c2c6c2" stroke-width="1.200"/></svg>
<svg class="a" style="left:139.5px;top:660px;" width="7" height="10" viewBox="0 0 7 10"><path d="M1.300 1l4.200 4-4.200 4" fill="none" stroke="#c2c6c2" stroke-width="1.200"/></svg>
<div class="a" style="left:182.3px;top:656.3px;width:76.19999999999999px;height:17.5px;background:#fdb92e;border-radius:3px;"></div>
<span class="t" style="left:192.3px;top:659.71px;font-size:10.8px;color:#3a2a00;font-weight:700;transform:scaleX(0.9623);">ข้อมูลพื้นฐาน</span>
<div class="a" style="left:265.3px;top:656.3px;width:95.0px;height:17.5px;background:#8fd16b;border-radius:3px;"></div>
<span class="t" style="left:277.3px;top:659.71px;font-size:10.8px;color:#1d3b12;font-weight:700;transform:scaleX(0.9389);">การมุ่งผลสัมฤทธิ์</span>
<div class="a" style="left:367.3px;top:656.3px;width:58.69999999999999px;height:17.5px;background:#8fd16b;border-radius:3px;"></div>
<span class="t" style="left:376.8px;top:659.71px;font-size:10.8px;color:#1d3b12;font-weight:700;transform:scaleX(0.9476);">บริการที่ดี</span>
<div class="a" style="left:432.8px;top:656.3px;width:130.99999999999994px;height:17.5px;background:#8fd16b;border-radius:3px;"></div>
<span class="t" style="left:445px;top:659.71px;font-size:10.8px;color:#1d3b12;font-weight:700;transform:scaleX(0.9664);">การสั่งสมความเชี่ยวชาญ</span>
<div class="a" style="left:571.3px;top:656.3px;width:132.5px;height:17.5px;background:#8fd16b;border-radius:3px;"></div>
<span class="t" style="left:584.5px;top:659.71px;font-size:10.8px;color:#1d3b12;font-weight:700;transform:scaleX(0.9501);">การยึดมั่นในความถูกต้อง</span>
<div class="a" style="left:710.8px;top:656.3px;width:95.5px;height:17.5px;background:#8fd16b;border-radius:3px;"></div>
<span class="t" style="left:720.8px;top:659.71px;font-size:10.8px;color:#1d3b12;font-weight:700;transform:scaleX(0.9783);">การทำงานเป็นทีม</span>
<div class="a" style="left:814.3px;top:654px;width:44.5px;height:20.5px;background:#cdeede;border-radius:3px;"></div>
<span class="t" style="left:820.8px;top:658.91px;font-size:10.8px;color:#1d3b2a;font-weight:700;transform:scaleX(1.0067);">สรุปผล</span>
<div class="a" style="left:820.5px;top:670.6px;width:33.5px;height:1.8px;background:#1f7a4c;border-radius:1px;"></div>
<svg class="a" style="left:894.5px;top:660px;" width="10" height="10" viewBox="0 0 10 10"><path d="M5 .5v9M.5 5h9" stroke="#555" stroke-width="1"/></svg>
<svg class="a" style="left:1053px;top:660px;" width="3" height="10" viewBox="0 0 3 10"><circle cx="1.500" cy="1.500" r=".9" fill="#555"/><circle cx="1.500" cy="5" r=".9" fill="#555"/><circle cx="1.500" cy="8.500" r=".9" fill="#555"/></svg>
<svg class="a" style="left:1069.5px;top:661px;" width="6" height="8" viewBox="0 0 6 8"><path d="M5.500 .5v7L.5 4z" fill="#6a686a"/></svg>
<div class="a" style="left:1079.5px;top:661.3px;width:160.5px;height:6.7px;background:#767376;border-radius:3.300px;"></div>
<svg class="a" style="left:1247.5px;top:661px;" width="6" height="8" viewBox="0 0 6 8"><path d="M.5 .5v7L5.500 4z" fill="#6a686a"/></svg>
<div class="a" style="left:96px;top:677.5px;width:1175px;height:16.8px;background:#f3f2f4;"></div>
<div class="a" style="left:96px;top:677px;width:1175px;height:0.8px;background:#dcdcdc;"></div>
<span class="t" style="left:105.5px;top:682.09px;font-size:8.6px;color:#8a8886;transform:scaleX(0.8775);">Ready</span>
<svg class="a" style="left:143px;top:681px;" width="12" height="11" viewBox="0 0 12 11"><rect x=".6" y="1.500" width="10.500" height="8.500" fill="none" stroke="#555" stroke-width="1"/><path d="M.6 3.800h10.500" stroke="#555" stroke-width=".9"/><circle cx="6.500" cy="7" r="1.800" fill="none" stroke="#555" stroke-width=".9"/></svg>
<svg class="a" style="left:167px;top:680.5px;" width="12" height="12" viewBox="0 0 12 12"><circle cx="5" cy="2" r="1.300" fill="none" stroke="#555" stroke-width=".9"/><path d="M1 4.500h8M5 4.500v3M5 7.500l-2.500 4M5 7.500l2.500 4" fill="none" stroke="#555" stroke-width=".9"/><path d="M8 8l3 3M11 8l-3 3" stroke="#555" stroke-width=".9"/></svg>
<span class="t" style="left:181px;top:682.09px;font-size:8.6px;color:#3b3a39;font-weight:700;transform:scaleX(0.9007);">Accessibility: Investigate</span>
<svg class="a" style="left:1052.5px;top:681px;" width="11" height="10" viewBox="0 0 11 10"><rect x=".5" y=".5" width="10" height="9" fill="none" stroke="#555" stroke-width="1"/><path d="M.5 3.500h10M.5 6.500h10M3.800 .5v9M7.200 .5v9" stroke="#555" stroke-width=".8"/></svg>
<svg class="a" style="left:1083px;top:681px;" width="11" height="10" viewBox="0 0 11 10"><rect x=".5" y=".5" width="10" height="9" fill="none" stroke="#555" stroke-width="1"/><rect x="3" y="3" width="5" height="4.500" fill="none" stroke="#555" stroke-width=".9"/></svg>
<div class="a" style="left:1104.5px;top:678px;width:30px;height:16px;background:#dedcde;"></div>
<svg class="a" style="left:1113.3px;top:680.5px;" width="12" height="10" viewBox="0 0 12 10"><rect x=".5" y=".5" width="10.500" height="9" fill="none" stroke="#444" stroke-width="1"/><path d="M4 .5v5.500M.5 6h10.500" fill="none" stroke="#444" stroke-width="1"/></svg>
<div class="a" style="left:1138.8px;top:685.8px;width:5px;height:1px;background:#555;"></div>
<div class="a" style="left:1148.8px;top:686px;width:76.2px;height:0.8px;background:#8a8886;"></div>
<div class="a" style="left:1187px;top:683.5px;width:0.8px;height:5px;background:#8a8886;"></div>
<div class="a" style="left:1190.5px;top:681.5px;width:3.2px;height:9.5px;background:#605e5c;"></div>
<svg class="a" style="left:1228.5px;top:683px;" width="6" height="6" viewBox="0 0 6 6"><path d="M3 0v6M0 3h6" stroke="#555" stroke-width="1"/></svg>
<span class="t" style="left:1245px;top:683.16px;font-size:8.2px;color:#605e5c;transform:scaleX(0.8591);">145%</span>
<div class="a" style="left:96px;top:694.3px;width:1175px;height:37px;background:#1c2b1c;"></div>
<svg class="a" style="left:102px;top:698.5px;" width="30" height="28" viewBox="0 0 30 28"><defs><radialGradient id="orb" cx=".5" cy=".45" r=".6"><stop offset="0" stop-color="#3fa7a0"/><stop offset=".6" stop-color="#2f7f86"/><stop offset="1" stop-color="#23566a"/></radialGradient></defs><rect x="21" y="5.500" width="8" height="16" fill="#2aa39c"/><circle cx="13.500" cy="14" r="13" fill="url(#orb)" stroke="#9fd2c8" stroke-width="1.300"/><path d="M7.500 17.500c-2-1.500-2.500-4-1.500-6.500 1.200-3.300 4.500-5.500 8.500-5.300 3.800.2 6.500 2.500 7 5.800.3 2.400-.8 4.300-2.500 5.500v3.500h-8v-2z" fill="#3a9fa0" stroke="#b7e39a" stroke-width="1.100"/></svg>
<svg class="a" style="left:146px;top:702px;" width="19" height="17" viewBox="0 0 19 17"><path d="M.5 2.500a1.500 1.500 0 0 1 1.500-1.500h5l2 2h8a1.500 1.500 0 0 1 1.500 1.500v10a1.500 1.500 0 0 1-1.500 1.500H2a1.500 1.500 0 0 1-1.500-1.500z" fill="#e9a620"/><path d="M.5 6.500h18v8a1.500 1.500 0 0 1-1.500 1.500H2a1.500 1.500 0 0 1-1.500-1.500z" fill="#fbd052"/></svg>
<span class="t" style="left:171px;top:708.88px;font-size:9.3px;color:#e8e8e8;transform:scaleX(0.9352);">Home - File Ex</span>
<svg class="a" style="left:244.5px;top:702.5px;" width="18" height="18" viewBox="0 0 18 18"><circle cx="9" cy="9" r="8.800" fill="#e5e5e5"/><path d="M9 .2a8.800 8.800 0 0 1 7.600 4.400H9a4.400 4.400 0 0 0-3.900 2.300L2 3.600A8.800 8.800 0 0 1 9 .2z" fill="#e33b2e"/><path d="M16.600 4.600A8.800 8.800 0 0 1 9.400 17.800l3.500-6.500a4.400 4.400 0 0 0 0-4.600z" fill="#f9c412"/><path d="M9.400 17.800A8.800 8.800 0 0 1 2 3.600l3.100 5.800a4.400 4.400 0 0 0 5 3.800z" fill="#2fa24d"/><circle cx="9" cy="9" r="3.500" fill="#3f7fe8" stroke="#fff" stroke-width=".9"/></svg>
<span class="t" style="left:269px;top:708.88px;font-size:9.3px;color:#e8e8e8;transform:scaleX(0.9506);">Master ชี้แจง สมร</span>
<svg class="a" style="left:349px;top:702px;" width="19" height="18" viewBox="0 0 19 18"><rect width="19" height="18" rx="4.500" fill="#10c152"/><ellipse cx="9.500" cy="8.500" rx="6.500" ry="5" fill="#fff"/><path d="M7 12.500l1 3 3-3z" fill="#fff"/><text x="4.200" y="10.300" font-size="4.500" font-weight="700" fill="#10c152" font-family="Liberation Sans,sans-serif">LINE</text></svg>
<svg class="a" style="left:382.8px;top:702px;" width="19" height="18" viewBox="0 0 19 18"><rect width="19" height="18" rx="2.500" fill="#f28c2a"/><rect x="2.500" y="2.500" width="14" height="10" rx="1" fill="#fbd7b0"/><circle cx="9.500" cy="11.500" r="4" fill="#f9b26a" stroke="#fff" stroke-width=".8"/></svg>
<svg class="a" style="left:418px;top:702px;" width="15" height="18" viewBox="0 0 15 18"><path d="M1 .5h9l4.500 4.500v12.500H1z" fill="#eef3fb" stroke="#9fb6d8" stroke-width=".8"/><path d="M10 .5V5h4.500" fill="#cddbf0"/><circle cx="6.500" cy="10.500" r="3" fill="none" stroke="#5a8fd0" stroke-width="1"/><path d="M4.500 12.800L2 16" stroke="#5a8fd0" stroke-width="1.200"/></svg>
<svg class="a" style="left:452px;top:702px;" width="14.5" height="18" viewBox="0 0 14.5 18"><rect width="14.500" height="18" rx="1.500" fill="#5b6f7f"/><rect x="2" y="2" width="10.500" height="4" fill="#bfe3f5"/><g fill="#dfe7ee"><rect x="2" y="8" width="2.500" height="2.200"/><rect x="6" y="8" width="2.500" height="2.200"/><rect x="10" y="8" width="2.500" height="2.200"/><rect x="2" y="11.300" width="2.500" height="2.200"/><rect x="6" y="11.300" width="2.500" height="2.200"/><rect x="10" y="11.300" width="2.500" height="2.200"/><rect x="2" y="14.500" width="2.500" height="2.200"/><rect x="6" y="14.500" width="2.500" height="2.200"/></g><rect x="10" y="14.500" width="2.500" height="2.200" fill="#3aa0e0"/></svg>
<svg class="a" style="left:486.5px;top:702px;" width="14.5" height="18" viewBox="0 0 14.5 18"><rect y="1.500" width="14.500" height="16.500" rx="1.500" fill="#35b5e8"/><rect x="1.500" y="4" width="11.500" height="12.500" fill="#6fd0f5"/><path d="M3 6.500h8.500M3 9h8.500M3 11.500h8.500M3 14h8.500" stroke="#1d7fb0" stroke-width=".9"/><path d="M3 0v3M6 0v3M9 0v3M12 0v3" stroke="#2a6f96" stroke-width="1"/></svg>
<svg class="a" style="left:518px;top:699px;" width="23" height="24" viewBox="0 0 23 24"><circle cx="15.500" cy="7.500" r="2.800" fill="#7b83eb"/><rect x="9" y="10.500" width="10.500" height="9" rx="2" fill="#5b62c8"/><circle cx="9.500" cy="8" r="3.200" fill="#7b83eb"/><rect x="0" y="8.500" width="11" height="11" rx="1.500" fill="#4b53bc"/><path d="M2.800 11.300h5.400M5.500 11.300v5.700" stroke="#fff" stroke-width="1.300"/><circle cx="16" cy="6" r="6" fill="#e8213a"/><path d="M13 6h6" stroke="#fff" stroke-width="1.600"/></svg>
<div class="a" style="left:525px;top:724.6px;width:4px;height:1.5px;background:#9a9a9a;border-radius:1px;"></div>
<span class="t" style="left:542.5px;top:708.88px;font-size:9.3px;color:#e8e8e8;transform:scaleX(0.9525);">Calendar | Calen</span>
<svg class="a" style="left:623.8px;top:699px;" width="23" height="24" viewBox="0 0 23 24"><circle cx="15.500" cy="7.500" r="2.800" fill="#7b83eb"/><rect x="9" y="10.500" width="10.500" height="9" rx="2" fill="#5b62c8"/><circle cx="9.500" cy="8" r="3.200" fill="#7b83eb"/><rect x="0" y="8.500" width="11" height="11" rx="1.500" fill="#4b53bc"/><path d="M2.800 11.300h5.400M5.500 11.300v5.700" stroke="#fff" stroke-width="1.300"/><circle cx="16" cy="6" r="6" fill="#e8213a"/><path d="M13 6h6" stroke="#fff" stroke-width="1.600"/></svg>
<div class="a" style="left:630.8px;top:724.6px;width:4px;height:1.5px;background:#9a9a9a;border-radius:1px;"></div>
<span class="t" style="left:647.5px;top:708.88px;font-size:9.3px;color:#e8e8e8;transform:scaleX(0.9153);">ชี้แจงการประเมินสม</span>
<svg class="a" style="left:728.8px;top:699px;" width="23" height="24" viewBox="0 0 23 24"><circle cx="15.500" cy="7.500" r="2.800" fill="#7b83eb"/><rect x="9" y="10.500" width="10.500" height="9" rx="2" fill="#5b62c8"/><circle cx="9.500" cy="8" r="3.200" fill="#7b83eb"/><rect x="0" y="8.500" width="11" height="11" rx="1.500" fill="#4b53bc"/><path d="M2.800 11.300h5.400M5.500 11.300v5.700" stroke="#fff" stroke-width="1.300"/><circle cx="16" cy="6" r="6" fill="#e8213a"/><path d="M13 6h6" stroke="#fff" stroke-width="1.600"/></svg>
<div class="a" style="left:735.8px;top:724.6px;width:4px;height:1.5px;background:#9a9a9a;border-radius:1px;"></div>
<span class="t" style="left:752.5px;top:708.88px;font-size:9.3px;color:#e8e8e8;transform:scaleX(0.9159);">แถบควบคุมการแชร์</span>
<div class="a" style="left:827.5px;top:697.5px;width:102.5px;height:30.5px;background:#2a382a;border-radius:4px;"></div>
<svg class="a" style="left:833.8px;top:702px;" width="19" height="18" viewBox="0 0 19 18"><rect x="5" y="0" width="14" height="18" rx="1.500" fill="#21a366"/><rect x="12" y="0" width="7" height="4.500" fill="#33c481"/><rect x="12" y="4.500" width="7" height="4.500" fill="#21a366"/><rect x="12" y="9" width="7" height="4.500" fill="#107c41"/><rect x="5" y="9" width="7" height="4.500" fill="#185c37"/><rect x="12" y="13.500" width="7" height="4.500" rx="1" fill="#185c37"/><rect x="0" y="4" width="10" height="10" rx="1" fill="#107c41"/><path d="M3 6.500l4 5M7 6.500l-4 5" stroke="#fff" stroke-width="1.300"/></svg>
<span class="t" style="left:858.8px;top:708.88px;font-size:9.3px;color:#e8e8e8;transform:scaleX(0.9193);">Doc_2568080817</span>
<div class="a" style="left:925px;top:700px;width:5px;height:24px;background:#2a382a;"></div>
<div class="a" style="left:836px;top:723.8px;width:14px;height:2.5px;background:#2a8bd8;border-radius:1.200px;"></div>
<div class="a" style="left:172px;top:724.6px;width:4px;height:1.5px;background:#7d7d7d;"></div>
<div class="a" style="left:251px;top:724.6px;width:4px;height:1.5px;background:#7d7d7d;"></div>
<svg class="a" style="left:938.8px;top:702px;" width="19" height="18" viewBox="0 0 19 18"><rect x="5" y="0" width="14" height="18" rx="1.500" fill="#21a366"/><rect x="12" y="0" width="7" height="4.500" fill="#33c481"/><rect x="12" y="4.500" width="7" height="4.500" fill="#21a366"/><rect x="12" y="9" width="7" height="4.500" fill="#107c41"/><rect x="5" y="9" width="7" height="4.500" fill="#185c37"/><rect x="12" y="13.500" width="7" height="4.500" rx="1" fill="#185c37"/><rect x="0" y="4" width="10" height="10" rx="1" fill="#107c41"/><path d="M3 6.500l4 5M7 6.500l-4 5" stroke="#fff" stroke-width="1.300"/></svg>
<span class="t" style="left:963.8px;top:708.88px;font-size:9.3px;color:#e8e8e8;transform:scaleX(0.9193);">Doc_2568030314</span>
<div class="a" style="left:1030px;top:700px;width:6px;height:24px;background:#1c2b1c;"></div>
<div class="a" style="left:946px;top:724.6px;width:4px;height:1.5px;background:#9a9a9a;border-radius:1px;"></div>
<svg class="a" style="left:1053px;top:707.5px;" width="10" height="7" viewBox="0 0 10 7"><path d="M1 6l4-4.500L9 6" fill="none" stroke="#f0f0f0" stroke-width="1.400"/></svg>
<div class="a" style="left:1070px;top:697.5px;width:25px;height:30px;background:#0c8ce0;border-radius:2.500px;"></div>
<svg class="a" style="left:1077.5px;top:705px;" width="10" height="14" viewBox="0 0 10 14"><rect x="3" y=".5" width="4" height="8" rx="2" fill="#14233a"/><path d="M1.200 6.500a3.800 3.800 0 0 0 7.600 0M5 10.300v2.700" fill="none" stroke="#14233a" stroke-width="1"/></svg>
<span class="t" style="left:1104.5px;top:708.88px;font-size:9.3px;color:#e8e8e8;transform:scaleX(0.9846);">ไทย</span>
<svg class="a" style="left:1135px;top:706.5px;" width="12" height="10" viewBox="0 0 12 10"><path d="M1 4a7.500 7.500 0 0 1 10 0" fill="none" stroke="#7f8a7f" stroke-width="1"/><path d="M3 6.200a4.500 4.500 0 0 1 6 0" fill="none" stroke="#e8e8e8" stroke-width="1"/><circle cx="6" cy="8.300" r="1" fill="#e8e8e8"/></svg>
<svg class="a" style="left:1152px;top:706px;" width="11" height="11" viewBox="0 0 11 11"><path d="M.8 4h2L6 1.300v8.400L2.800 7h-2z" fill="none" stroke="#e8e8e8" stroke-width="1"/><path d="M8 3.500a3 3 0 0 1 0 4" fill="none" stroke="#e8e8e8" stroke-width=".9"/></svg>
<svg class="a" style="left:1171px;top:705.5px;" width="12" height="11" viewBox="0 0 12 11"><rect x=".6" y="3" width="9.500" height="6.500" rx="1" fill="none" stroke="#e8e8e8" stroke-width="1"/><rect x="2" y="4.500" width="6.500" height="3.500" fill="#e8e8e8"/><path d="M10.500 5v2.500" stroke="#e8e8e8" stroke-width="1.200"/><path d="M2.500 2.500L5 .5l1 1.500" fill="none" stroke="#e8e8e8" stroke-width=".9"/></svg>
<span class="t" style="left:1216.3px;top:702.13px;font-size:8.8px;color:#e8e8e8;transform:scaleX(0.9630);">14:58</span>
<span class="t" style="left:1195.8px;top:713.19px;font-size:8.8px;color:#e8e8e8;transform:scaleX(1.0654);">22/8/2568</span>
<svg class="a" style="left:1244px;top:705.5px;" width="12" height="12" viewBox="0 0 12 12"><path d="M6 1a3.600 3.600 0 0 1 3.600 3.600V7.500l1.200 1.800H1.200l1.200-1.800V4.600A3.600 3.600 0 0 1 6 1z" fill="#e8e8e8"/><path d="M4.500 10.300a1.500 1.500 0 0 0 3 0" fill="#e8e8e8"/><text x="7" y="5" font-size="4.500" fill="#e8e8e8" font-family="Liberation Sans,sans-serif">zz</text></svg>
<div class="a" style="left:117.3px;top:713.8px;width:295.7px;height:65px;background:rgba(17,17,17,.94);border-radius:7px;"></div>
<span class="t" style="left:136.5px;top:736.66px;font-size:23.5px;color:#f2f2f2;transform:scaleX(1.0286);">Rattikarn Nawichai</span>
<div class="a" style="left:364.5px;top:744.2px;width:6px;height:6px;background:#f2f2f2;border-radius:50%;"></div>
<div class="a" style="left:372.4px;top:744.2px;width:6px;height:6px;background:#f2f2f2;border-radius:50%;"></div>
<div class="a" style="left:380.3px;top:744.2px;width:6px;height:6px;background:#f2f2f2;border-radius:50%;"></div>
<div class="a" style="left:1272.5px;top:1px;width:205px;height:153px;background:#222222;border-radius:6px;box-shadow:inset 0 0 0 1px #1a1a1a;"></div>
<div class="a" style="left:1272.5px;top:365.3px;width:205px;height:203.5px;background:#222222;border-radius:6px;box-shadow:inset 0 0 0 1px #1a1a1a;"></div>
<div class="a" style="left:1272.5px;top:573.6px;width:205px;height:202.8px;background:#222222;border-radius:6px;box-shadow:inset 0 0 0 1px #1a1a1a;"></div>
<div class="a" style="left:1272.5px;top:781.6px;width:205px;height:40px;background:#222222;border-radius:6px;box-shadow:inset 0 0 0 1px #1a1a1a;"></div>
<svg class="a" style="left:1343.2px;top:46.2px;" width="63.4" height="63.8" viewBox="0 0 63.4 63.8"><defs><clipPath id="av1"><circle cx="31.700" cy="31.900" r="31.500"/></clipPath>
<filter id="bl1" x="-10%" y="-10%" width="120%" height="120%"><feGaussianBlur stdDeviation=".7"/></filter></defs>
<g clip-path="url(#av1)"><rect width="64" height="64" fill="#c3bfea"/><g filter="url(#bl1)"><rect x="7.500" y="10" width="50" height="56" fill="#dcdcd5"/>
<rect x="6.800" y="12" width="1.200" height="52" fill="#a9a69c"/>
<path d="M25.500 30c0-9 3.500-14 9.500-14s9.800 5 9.800 13c0 8 4 14 7.200 19.500L44 55l-17-6c-.5-7-1.500-12-1.500-19z" fill="#4a312b"/>
<ellipse cx="34.800" cy="30.500" rx="7" ry="9.300" fill="#e9c6b6"/>
<path d="M30 34.500c3 2.200 6.500 2.200 9.500 0" fill="none" stroke="#c9575a" stroke-width="1.300"/>
<path d="M11 66c0-13 4-21 14-23.500l8 7.500 9-6.500c9 2 14 9 14 22.500z" fill="#d81f33"/>
<path d="M28 47l6.500 4.500L41 47l2 19H27z" fill="#27347a"/><path d="M30 40h9v8l-4.500 3-4.500-3z" fill="#e3bba9"/></g></g></svg>
<div class="a" style="left:1272.5px;top:158px;width:205px;height:203.3px;background:#8282f6;border-radius:6px;"></div>
<svg class="a" style="left:1279px;top:164.5px;" width="191.5" height="190" viewBox="0 0 191.5 190"><defs><clipPath id="vd"><rect width="191.500" height="190"/></clipPath>
<linearGradient id="skin" x1="0" y1="0" x2="0" y2="1"><stop offset="0" stop-color="#d9b6a7"/><stop offset=".5" stop-color="#c9a08f"/><stop offset="1" stop-color="#b38877"/></linearGradient>
<linearGradient id="slat" x1="0" y1="0" x2="0" y2="1"><stop offset="0" stop-color="#efb39c"/><stop offset=".75" stop-color="#e7a58d"/><stop offset="1" stop-color="#d6937b"/></linearGradient>
<filter id="bl2" x="-5%" y="-5%" width="110%" height="110%"><feGaussianBlur stdDeviation="1.100"/></filter>
<filter id="bl3" x="-5%" y="-5%" width="110%" height="110%"><feGaussianBlur stdDeviation="2.200"/></filter></defs>
<g clip-path="url(#vd)">
<rect width="191.500" height="190" fill="#d9cbc5"/>
<g filter="url(#bl2)">
<rect x="-2" y="-2" width="196" height="9" fill="url(#slat)"/><rect x="-2" y="7" width="196" height="10" fill="url(#slat)"/><rect x="-2" y="17" width="196" height="10" fill="url(#slat)"/>
<rect x="93.500" y="27" width="100" height="6" fill="url(#slat)"/><rect x="93.500" y="33" width="100" height="6.800" fill="url(#slat)"/><rect x="93.500" y="39.800" width="100" height="6.800" fill="url(#slat)"/><rect x="93.500" y="46.600" width="100" height="6.800" fill="url(#slat)"/><rect x="93.500" y="53.400" width="100" height="7" fill="url(#slat)"/>
<rect x="161" y="60" width="32" height="8" fill="#e3a58e"/>
<rect x="-2" y="27" width="95.500" height="40" fill="#dacdc8"/>
<rect x="-2" y="67" width="95.500" height="90" fill="#d6c6c0"/>
<rect x="-2" y="66.300" width="95.500" height="1" fill="#c9b9b2"/>
<rect x="96" y="43" width="65" height="30" fill="#e2d8d3"/>
<path d="M104 43v30M112 43v30M120 43v30M128 43v30M136 43v30M144 43v30M152 43v30" stroke="#d3c7c1" stroke-width="1"/>
<rect x="161" y="68" width="32" height="80" fill="#dccbc5"/>
<path d="M171 92c4-5 12-6 20-3v5c-7-2-14-1-20-2z" fill="#e9ddd6"/><rect x="180" y="86" width="1.300" height="8" fill="#cbb9b0"/>
<rect x="170" y="135" width="24" height="17" fill="#dfa793"/><path d="M176 136v15M182 136v15M188 136v15" stroke="#c98f7c" stroke-width="1"/>
<rect x="-2" y="138" width="16" height="13" fill="#e2b3a2"/>
</g>
<g filter="url(#bl2)">
<path d="M50 192C47 162 43 126 48.500 100 52.500 80 62 63 75 54.500c10-6.500 26-10.500 41-5 22 9 42 31 51 55 6 18 5 36 1.500 48l2 40z" fill="#31302f"/>
<path d="M96 46C78 48 64 60 57 80c-4 11-6 24-6 34 3-12 8-27 17-39C77 63 89 55 104 50z" fill="#858684"/><path d="M94 47C80 51 70 62 66 78c4-10 12-20 30-27z" fill="#b0b1af"/>
<path d="M99 46c16 3 31 13 42 30-11-9-26-19-44-24z" fill="#adaeac"/>
<path d="M52 110c-4 14-4 30-1 44" fill="none" stroke="#5c5c5a" stroke-width="1.500"/>
</g>
<g filter="url(#bl3)">
<path d="M64 192C60 166 56 141 60 120c2-14 8-27 16-37 6-8 14-14 21-17 3-1 6-1 9 0 14 5 27 15 37 30 10 16 15 37 15.500 54l-.5 42z" fill="url(#skin)"/>
<ellipse cx="103" cy="94" rx="20" ry="12" fill="#e0c2b5" opacity=".6"/>
<ellipse cx="111" cy="143" rx="15" ry="9" fill="#c59e8d"/>
<path d="M60 148c6 10 10 24 12 44H60z" fill="#a47a6b" opacity=".65"/>
<path d="M159 148c-6 10-8 26-9 44h10z" fill="#a47a6b" opacity=".65"/>
</g>
<g filter="url(#bl2)">
<path d="M71 99c9-3.500 20-3.500 30 0" fill="none" stroke="#75574d" stroke-width="3.200" stroke-linecap="round"/>
<path d="M117 96c9-3.500 19-3.500 29 .5" fill="none" stroke="#75574d" stroke-width="3.200" stroke-linecap="round"/>
<path d="M72 116.500c8 2.500 17 2.500 25 0" fill="none" stroke="#6a4a40" stroke-width="2"/>
<path d="M123 113c8 2.500 16 2.500 23-.5" fill="none" stroke="#6a4a40" stroke-width="2"/>
<ellipse cx="103" cy="146.500" rx="4" ry="2.300" fill="#4d2f27"/><ellipse cx="121" cy="146" rx="4" ry="2.300" fill="#4d2f27"/>
<path d="M106 122c-2 9-4 15-6 20M118 122c1 8 4 14 7 19" fill="none" stroke="#c39886" stroke-width="1.500"/>
</g>
<rect x="0" y="150" width="191.500" height="40" fill="#2d2522" opacity=".88"/>
</g></svg>
<span class="t" style="left:1288.5px;top:323.25px;font-size:23.5px;color:#f0f0f0;transform:scaleX(1.0128);">Rattikarn Naw...</span>
<svg class="a" style="left:1334.3px;top:426.2px;" width="82.6" height="83" viewBox="0 0 82.6 83"><defs><clipPath id="av2"><circle cx="41.300" cy="41.500" r="41.200"/></clipPath>
<filter id="bl4" x="-10%" y="-10%" width="120%" height="120%"><feGaussianBlur stdDeviation=".8"/></filter></defs>
<g clip-path="url(#av2)"><rect width="83" height="83" fill="#b7d3e1"/><g filter="url(#bl4)">
<rect x="-2" y="-2" width="57" height="24" fill="#8c9ab2"/>
<rect x="10" y="5" width="40" height="6" fill="#c9d6ea"/><rect x="16" y="11.500" width="36" height="4.500" fill="#a8bad6"/><rect x="22" y="16.500" width="26" height="4.500" fill="#dc7a4a"/>
<circle cx="10" cy="33" r="7" fill="#c9b9a3"/><circle cx="10" cy="33" r="4" fill="#a9b98f"/>
<circle cx="30.500" cy="37" r="9.500" fill="#dba9ab"/><circle cx="32" cy="36" r="5" fill="#e7c3c5"/>
<circle cx="14" cy="60" r="8.500" fill="#d2aaa4"/><circle cx="14" cy="60" r="5" fill="#e2c4be"/>
<circle cx="33" cy="76" r="6" fill="#d9b9b5"/>
<path d="M22 78L44 52" stroke="#8f9fb0" stroke-width="1.200"/>
<rect x="54" y="-2" width="10.500" height="87" fill="#5b4b3a"/><rect x="57.500" y="-2" width="3" height="87" fill="#7a6852"/>
<rect x="64.500" y="-2" width="20" height="87" fill="#b3bccb"/>
<path d="M64.500 27h20M64.500 33h20" stroke="#7d8698" stroke-width="1.500"/><rect x="70" y="33" width="2" height="50" fill="#8a93a5"/><rect x="78" y="33" width="2" height="50" fill="#8a93a5"/>
<path d="M40.500 40c0-8 3-11.500 7.500-11.500s8 3.500 8 11c0 5 .5 8 1.500 10.500H39.500c1-3 1-6 1-10z" fill="#1e1a1b"/>
<ellipse cx="47.300" cy="41" rx="5.300" ry="6.800" fill="#cf9f80"/>
<path d="M42.500 39.500h4M48.500 39.500h4" stroke="#2a2224" stroke-width="1.200"/>
<path d="M37 85c-1-18 2-30 11-35 8-1 15 1 19 6 4 6 5 16 4 29z" fill="#ebe0e2"/>
<ellipse cx="52" cy="62" rx="7" ry="5" fill="#d9c0cb"/>
<path d="M38 70c8 3 22 3 32-3l1 8c-10 6-24 6-33 2z" fill="#d3a284"/>
<path d="M40 72c8 2 18 0 26-6" fill="none" stroke="#b98a6e" stroke-width="1"/></g></g></svg>
<span class="t" style="left:1289.5px;top:531.71px;font-size:23.5px;color:#e6e6e6;transform:scaleX(0.9765);">Wasinee Pa...</span>
<svg class="a" style="left:1333.2px;top:633.7px;" width="83" height="83.4" viewBox="0 0 83 83.4"><defs><clipPath id="av3"><circle cx="41.500" cy="41.700" r="41.300"/></clipPath>
<filter id="bl5" x="-10%" y="-10%" width="120%" height="120%"><feGaussianBlur stdDeviation=".9"/></filter>
<filter id="bl6" x="-20%" y="-20%" width="140%" height="140%"><feGaussianBlur stdDeviation="3"/></filter></defs>
<g clip-path="url(#av3)"><rect width="84" height="84" fill="#141d18"/>
<g filter="url(#bl6)"><ellipse cx="48" cy="26" rx="14" ry="9" fill="#33493a"/><ellipse cx="24" cy="17" rx="12" ry="7" fill="#26382c"/><ellipse cx="66" cy="40" rx="8" ry="10" fill="#22352a"/><ellipse cx="16" cy="50" rx="9" ry="12" fill="#1d2b22"/></g>
<g filter="url(#bl5)">
<path d="M54 84c1-12 4-22 10-30 6-6 14-9 22-9v39z" fill="#86b43c"/>
<path d="M64 52c6-4 14-6 20-4l-4 22c-6 2-12 0-16-4z" fill="#c3df86"/>
<path d="M56 60l26 8M60 50l10 30" stroke="#1d2b1c" stroke-width="2"/>
<path d="M34.500 40c0-7 2.500-11 7-11s7.500 4 7.500 10c0 4 .5 7 1.500 9.500H33c1-2.500 1.500-5.500 1.500-8.500z" fill="#2b201b"/>
<ellipse cx="41.800" cy="39.500" rx="4.800" ry="6.300" fill="#e2bba3"/>
<path d="M26 60c0-8 4-12 10-12.500h11c6 .5 10 4.500 10 12.500l-3 1v14H29V61z" fill="#efeff0"/>
<path d="M27 60l3 1.500L27 84h-4c0-9 1-17 4-24zM56 60l-3 1.500L55 84h4c0-9 0-17-3-24z" fill="#e0b79e"/>
<path d="M29 73c8 2 17 2 25 0v12H28z" fill="#5b82b4"/></g></g></svg>
<span class="t" style="left:1289.5px;top:738.32px;font-size:23.5px;color:#e6e6e6;transform:scaleX(0.9880);">Veeranan C...</span>
<svg class="a" style="left:1439px;top:531.6px;" width="20.54" height="20.54" viewBox="0 0 20.54 20.54"><g transform="scale(0.395)"><rect x="16.500" y=".9" width="18.800" height="35" rx="9.400" fill="#e6e6e6"/>
<path d="M10.800 24.500V26.300a14.900 14.900 0 0 0 29.800 0V24.500M25.700 41.500v8" fill="none" stroke="#e6e6e6" stroke-width="3" stroke-linecap="round"/>
<path d="M4 0L52 47.600" stroke="#222222" stroke-width="3.400"/><path d="M1.800 2L49.500 49.300" stroke="#e6e6e6" stroke-width="3" stroke-linecap="round"/></g></svg>
<svg class="a" style="left:1439px;top:739.2px;" width="20.54" height="20.54" viewBox="0 0 20.54 20.54"><g transform="scale(0.395)"><rect x="16.500" y=".9" width="18.800" height="35" rx="9.400" fill="#e6e6e6"/>
<path d="M10.800 24.500V26.300a14.900 14.900 0 0 0 29.800 0V24.500M25.700 41.500v8" fill="none" stroke="#e6e6e6" stroke-width="3" stroke-linecap="round"/>
<path d="M4 0L52 47.600" stroke="#222222" stroke-width="3.400"/><path d="M1.800 2L49.500 49.300" stroke="#e6e6e6" stroke-width="3" stroke-linecap="round"/></g></svg>
<div class="a" style="left:1495px;top:43px;width:123px;height:123.3px;background:#9b3030;border-radius:13px;"></div>
<svg class="a" style="left:1531px;top:93px;" width="51" height="23" viewBox="0 0 51 23"><path d="M.8 12C.8 6 10 .2 25.500 .2 41 .2 50.200 6 50.200 12l-.6 5.500c-.3 3-2.100 4.500-4.600 4.300l-9-1c-2-.3-3-1.300-3.200-3.300l-1.300-6c-.2-.9-.7-1.300-1.500-1.300h-9c-.8 0-1.300.4-1.500 1.300l-1.300 6c-.2 2-1.200 3-3.200 3.300l-9 1c-2.500.2-4.300-1.300-4.600-4.300z" fill="#fff"/></svg>
<div class="a" style="left:1534.5px;top:247px;width:11px;height:11px;background:#e6e6e6;border-radius:50%;"></div>
<div class="a" style="left:1550.9px;top:247px;width:11px;height:11px;background:#e6e6e6;border-radius:50%;"></div>
<div class="a" style="left:1567.4px;top:247px;width:11px;height:11px;background:#e6e6e6;border-radius:50%;"></div>
<svg class="a" style="left:1531px;top:377.5px;" width="52" height="45" viewBox="0 0 52 45"><path d="M4.500 12.400H13L27 1.600c1.800-1.300 3.800-.3 3.800 1.700v38c0 2-2 3-3.800 1.700L13 32.200H4.500c-2.300 0-3.800-1.700-3.800-3.700V16.100c0-2.100 1.500-3.700 3.800-3.700z" fill="#e6e6e6"/><path d="M36.500 10.800c7 6.200 7 16.700 0 23.100" fill="none" stroke="#e6e6e6" stroke-width="2.600" stroke-linecap="round"/><path d="M41.900 5c10.100 10 10.100 25 0 35" fill="none" stroke="#e6e6e6" stroke-width="2.600" stroke-linecap="round"/></svg>
<svg class="a" style="left:1531px;top:522px;" width="52.0" height="52.0" viewBox="0 0 52.0 52.0"><g transform="scale(1.0)"><rect x="16.500" y=".9" width="18.800" height="35" rx="9.400" fill="#e6e6e6"/>
<path d="M10.800 24.500V26.300a14.900 14.900 0 0 0 29.800 0V24.500M25.700 41.500v8" fill="none" stroke="#e6e6e6" stroke-width="3" stroke-linecap="round"/>
<path d="M4 0L52 47.600" stroke="#292929" stroke-width="3.400"/><path d="M1.800 2L49.500 49.300" stroke="#e6e6e6" stroke-width="3" stroke-linecap="round"/></g></svg>
<svg class="a" style="left:1531px;top:670px;" width="53" height="51" viewBox="0 0 53 51"><rect x=".75" y="8.800" width="32.800" height="32.800" rx="6.500" fill="#e6e6e6"/><path d="M35.700 19.500L47 11.300c1.600-1.100 3.200-.2 3.200 1.700v24.500c0 1.900-1.600 2.800-3.200 1.700l-11.300-8z" fill="#e6e6e6"/>
<path d="M4 -.6L52 47.400" stroke="#292929" stroke-width="3.400"/><path d="M1.800 1.600L49.500 49.300" stroke="#e6e6e6" stroke-width="3" stroke-linecap="round"/></svg>
<div class="a" style="left:96px;top:106px;width:1px;height:588.3px;background:#a3a1a5;"></div>
</body></html>
